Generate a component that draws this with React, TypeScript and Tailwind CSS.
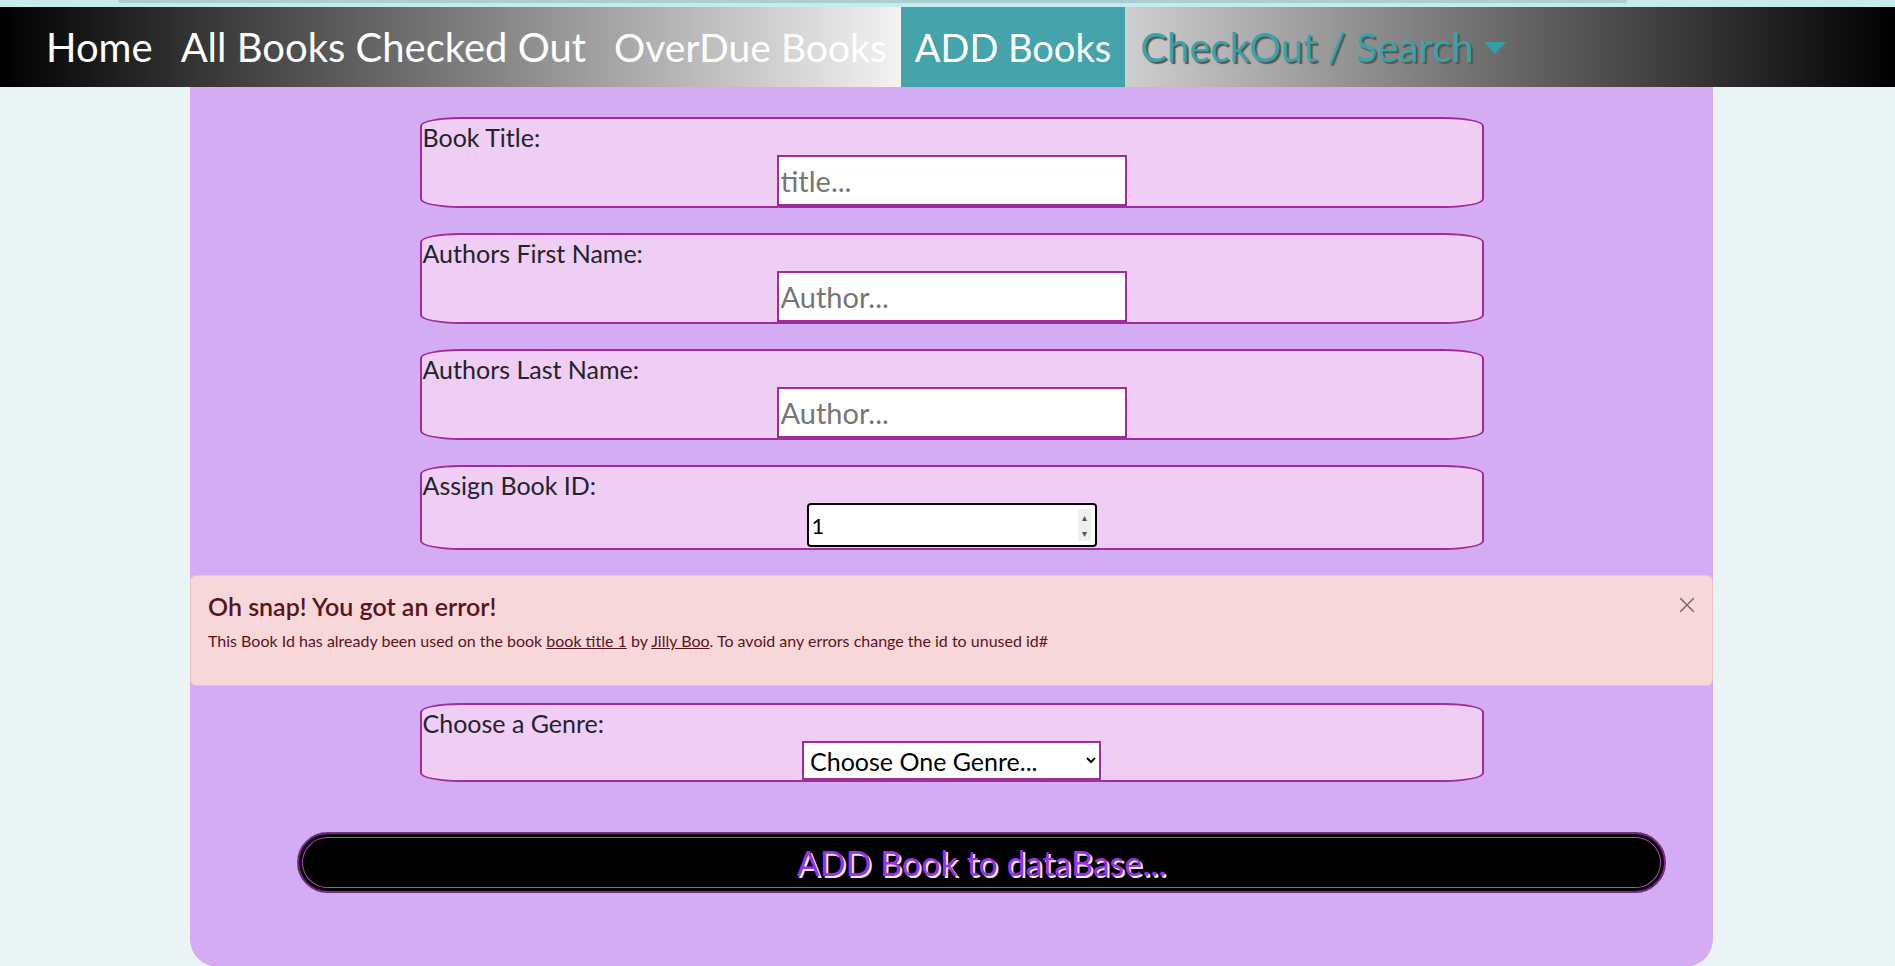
import { useState } from "react";

const font = "font-['Lato','Liberation_Sans',sans-serif]";

const FieldBox = ({ label, children }: { label: string; children: React.ReactNode }) => (
	<div className="w-[1064px] mx-auto border-2 border-[#a02c98] bg-[#efcdf4] rounded-[40px/9px] flex flex-col">
		<label className="text-[25px] leading-[36px] text-[#212529] pl-[1px]">{label}</label>
		<div className="flex justify-center">{children}</div>
	</div>
);

const App = () => {
	const [title, setTitle] = useState("");
	const [first, setFirst] = useState("");
	const [last, setLast] = useState("");
	const [bookId, setBookId] = useState("1");
	const [genre, setGenre] = useState("");

	return (
		<div className={`min-h-screen bg-[#eaf4f4] ${font}`}>
			<div className="h-[7px] bg-[#c4ecec] px-[118px]">
				<div className="h-[3px] bg-[#a9cfcf] rounded-b-full mr-[150px]" />
			</div>
			<nav className="h-[80px] flex items-stretch pl-[32px] bg-[linear-gradient(to_right,#000,#fff,#000)]">
				<a className="flex items-center px-[14px] text-white text-[40px] cursor-pointer">Home</a>
				<a className="flex items-center px-[14px] text-white text-[40px] cursor-pointer">All Books Checked Out</a>
				<a className="flex items-center px-[14px] text-white text-[39px] cursor-pointer">OverDue Books</a>
				<a className="flex items-center px-[14px] bg-[#45a3ab] text-white text-[38px] cursor-pointer">ADD Books</a>
				<a className="flex items-center pl-[15px] text-[#3aa2aa] text-[40px] cursor-pointer [text-shadow:2px_2px_1px_#555]">
					CheckOut / Search
					<span className="ml-[10px] mt-[2px] w-0 h-0 border-l-[11px] border-r-[11px] border-t-[12px] border-l-transparent border-r-transparent border-t-[#33a0a8]" />
				</a>
			</nav>

			<main className="w-[1523px] ml-[190px] bg-[#d4acf4] rounded-b-[28px] pt-[30px] pb-[74px]">
				<div className="flex flex-col">
					<FieldBox label="Book Title:">
						<input
							value={title}
							onChange={(e) => setTitle(e.target.value)}
							placeholder="title..."
							className="w-[350px] h-[51px] bg-white border-2 border-[#a02c98] text-[29px] px-[2px] placeholder:text-[#767676] outline-none"
						/>
					</FieldBox>
					<div className="mt-[25px]">
						<FieldBox label="Authors First Name:">
							<input
								value={first}
								onChange={(e) => setFirst(e.target.value)}
								placeholder="Author..."
								className="w-[350px] h-[51px] bg-white border-2 border-[#a02c98] text-[29px] px-[2px] placeholder:text-[#767676] outline-none"
							/>
						</FieldBox>
					</div>
					<div className="mt-[25px]">
						<FieldBox label="Authors Last Name:">
							<input
								value={last}
								onChange={(e) => setLast(e.target.value)}
								placeholder="Author..."
								className="w-[350px] h-[51px] bg-white border-2 border-[#a02c98] text-[29px] px-[2px] placeholder:text-[#767676] outline-none"
							/>
						</FieldBox>
					</div>
					<div className="mt-[25px]">
						<FieldBox label="Assign Book ID:">
							<div className="relative mb-[1px]">
								<input
									type="number"
									value={bookId}
									onChange={(e) => setBookId(e.target.value)}
									className="w-[290px] h-[44px] bg-white border-2 border-black rounded-[4px] text-[22px] px-[3px] outline-none [appearance:textfield] [&::-webkit-inner-spin-button]:appearance-none"
								/>
								<div className="absolute right-[6px] top-[6px] bottom-[6px] w-[13px] bg-[#efefef] flex flex-col items-center justify-around text-[#555] text-[10px] leading-none">
									<span>▴</span>
									<span>▾</span>
								</div>
							</div>
						</FieldBox>
					</div>

					<div className="mt-[25px] rounded-[6px] border border-[#f1c0c5] bg-[#f8d7da] text-[#58151c] pl-[17px] pr-[48px] pt-[16px] pb-[16px] relative">
						<h4 className="text-[25px] leading-[29px] font-semibold mb-[8px]">Oh snap! You got an error!</h4>
						<p className="text-[16px] leading-[24px] mb-[16px]">
							This Book Id has already been used on the book <a className="underline">book title 1</a> by{" "}
							<a className="underline">Jilly Boo</a>. To avoid any errors change the id to unused id#
						</p>
						<button className="absolute right-[16px] top-[20px] w-[18px] h-[18px] opacity-50">
							<svg viewBox="0 0 16 16" className="w-full h-full" fill="none" stroke="#000" strokeWidth="1.4">
								<path d="M2 2 L14 14 M14 2 L2 14" />
							</svg>
						</button>
					</div>

					<div className="mt-[17px]">
						<FieldBox label="Choose a Genre:">
							<select
								value={genre}
								onChange={(e) => setGenre(e.target.value)}
								className="w-[299px] h-[39px] bg-white border-2 border-[#a02c98] text-[25px] leading-none text-black px-[2px] outline-none"
							>
								<option value="">Choose One Genre...</option>
								<option value="fiction">Fiction</option>
								<option value="mystery">Mystery</option>
								<option value="fantasy">Fantasy</option>
							</select>
						</FieldBox>
					</div>
				</div>

				<button className="mt-[50px] ml-[107px] w-[1369px] h-[61px] rounded-full bg-black border-2 border-[#7a2a80] shadow-[inset_0_0_0_3px_#000,inset_0_0_0_4px_#b44cc4] text-[34px] text-[#9a32e6] [text-shadow:2px_2px_0_#f2e6f6]">
					ADD Book to dataBase...
				</button>
			</main>
		</div>
	);
};

export default App;
